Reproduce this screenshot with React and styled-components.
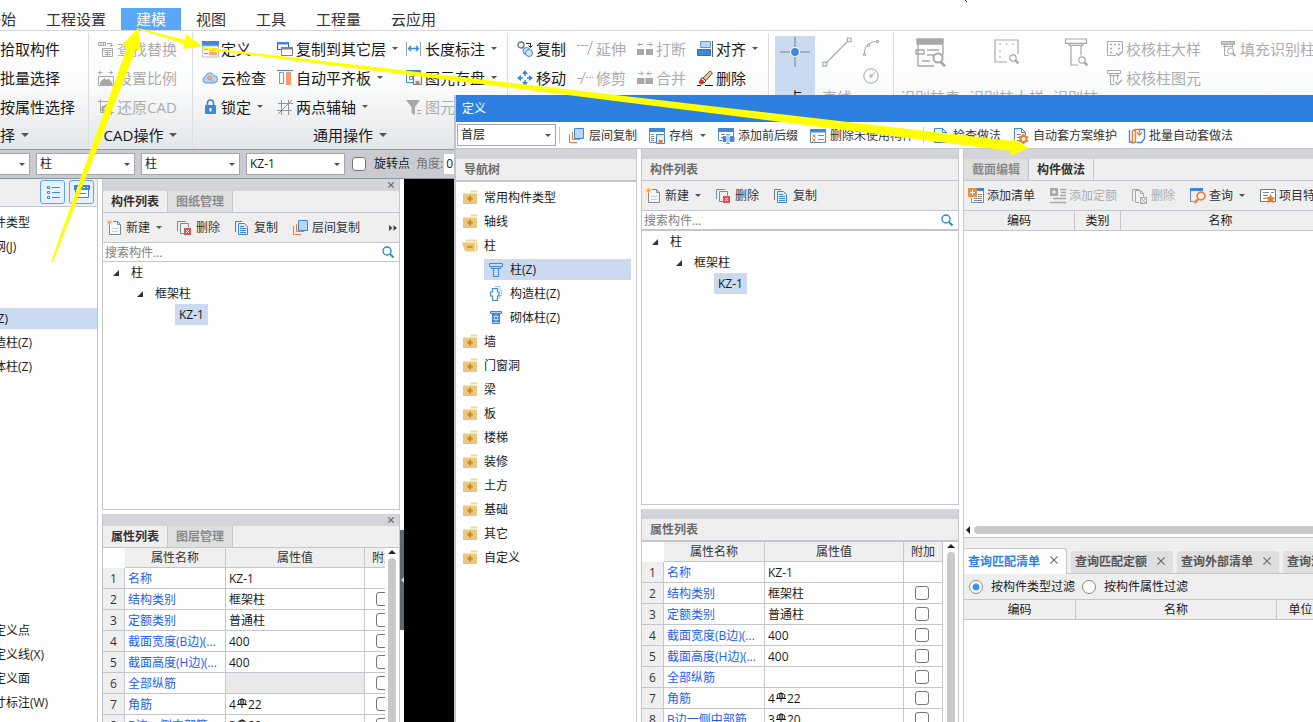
import React from "react";
import styled, { createGlobalStyle, css } from "styled-components";

const GlobalStyle = createGlobalStyle`
  * {
    box-sizing: border-box;
  }

  body {
    margin: 0;
    font-family: "Open Sans", "Noto Sans CJK SC", sans-serif;
    font-size: 12px;
    line-height: 20px;
    color: #1a1a1a;
  }

  button,
  input,
  select {
    margin: 0;
    font: inherit;
    color: inherit;
  }
`;

const BLUE = "#3f87d9";
const GRAY = "#a8a8a8";
const ORANGE = "#ee7b2f";
const LINE = "#c3c6cc";

/* ---------- icons ---------- */

const Svg = styled.svg`
  display: block;
  flex: none;
  overflow: visible;
`;

const icons = {
  findReplace: (
    <g fill="none" stroke={GRAY}>
      <path d="M0.500 1.500h7v3h-7zM3 1.500v3M5.500 1.500v3M9 2.500h4.500V5M12 4l1.500 1.500L15 4" />
      <path d="M4.500 7.500h10v8h-10zM4.500 9.500h10M6.500 11.500h6M6.500 13.500h6M9.500 9.500v6" />
    </g>
  ),
  scale: (
    <g fill="none" stroke={GRAY}>
      <path d="M0.500 2.500h4M2.500 0.500l-2 2 2 2M10.500 2.500h4M12.500 0.500l2 2-2 2M0.500 6.500h15v9H0.500z" />
      <path d="M2.500 14.500v-2l4-4 2 2 2-1.500 3.500 4v1.500z" fill={GRAY} />
    </g>
  ),
  restore: (
    <g fill="none" stroke={GRAY}>
      <path d="M2.500 0v13.500H16M0 2.500h13.500V16" />
      <path d="M4 12c1-4 3-6 8-7M4 12l1-5M4 12l5-1" strokeWidth="2" />
    </g>
  ),
  define: (
    <>
      <path d="M0 0h17v5H0z" fill={BLUE} />
      <path d="M0.500 5h16v11h-16z" fill="#f3f3f3" stroke="#bfc4ca" />
      <path d="M2 8.500h4M2 12.500h4" stroke="#8a9299" />
      <path d="M7.500 7.500h7v2h-7zM7.500 11.500h7v2h-7z" fill="#f6bf62" stroke="#efa744" />
    </>
  ),
  cloud: (
    <>
      <path d="M4 13a3.300 3.300 0 0 1-.5-6.500A4.500 4.500 0 0 1 12 5.500a3.800 3.800 0 0 1 .5 7.500z" fill="#b5d3f5" stroke="#5c97dc" />
      <circle cx="7.500" cy="8" r="1.800" fill="none" stroke={ORANGE} />
      <path d="M9 9.500l2 2" stroke={ORANGE} />
    </>
  ),
  lock: (
    <>
      <path d="M5.500 7V4a3 3 0 0 1 6 0v3" fill="none" stroke="#3f7fd0" strokeWidth="1.600" />
      <rect x="3" y="6" width="11" height="9" rx="1" fill={BLUE} />
      <path d="M8.500 9v3.500" stroke="#fff" strokeWidth="2" />
    </>
  ),
  copyLayer: (
    <>
      <path d="M0.500 1.500h11v7h-11z" fill="#fff" stroke="#444f5c" />
      <path d="M0 1h12v2.500H0z" fill={BLUE} />
      <path d="M4.500 6.500h11v8h-11z" fill="#fff" stroke="#7b858f" />
      <path d="M4 6h12v2.500H4z" fill="#7b858f" />
    </>
  ),
  flatSlab: (
    <>
      <path d="M0 0.500h16" stroke={BLUE} />
      <path d="M2.500 2.500h4v11h-4z" fill="#fff" stroke="#8d949b" />
      <path d="M9 2h5v13H9z" fill="#fb9a6d" />
    </>
  ),
  axis: (
    <>
      <path d="M4.500 1v15M11.500 1v15M1 4.500h15M0 11.500h15" stroke="#8e969c" />
      <path d="M1 15L15 1" stroke={ORANGE} />
    </>
  ),
  dimension: (
    <>
      <path d="M0.500 1v14M14.500 1v14" stroke="#9aa2aa" />
      <path d="M2.500 7.500h10M5 5L2.500 7.500 5 10M10 5l2.500 2.500L10 10" fill="none" stroke={BLUE} strokeWidth="1.400" />
    </>
  ),
  saveElement: (
    <>
      <path d="M0.500 1v11.500H7" fill="none" stroke={BLUE} />
      <path d="M0 0h15v4H0z" fill={BLUE} />
      <path d="M3.500 6.500h3v3h-3z" fill="none" stroke="#7c8790" />
      <path d="M7.500 5.500h8v9h-8z" fill="#e4f0fd" stroke={BLUE} />
      <path d="M9 6h5v3H9z" fill="#fff" />
      <path d="M9.500 11h4v3.500h-4z" fill={ORANGE} />
    </>
  ),
  filter: (
    <>
      <path d="M0 1h14L9 8v8l-3.500-2V8z" fill={GRAY} />
      <path d="M11 11.500h4M11 14.500h4" stroke={GRAY} />
    </>
  ),
  copyCircles: (
    <>
      <circle cx="4" cy="4" r="3" fill="#fff" stroke="#636b72" strokeWidth="1.300" />
      <circle cx="9.500" cy="10" r="3.500" fill="#cfe4fa" stroke={BLUE} />
      <circle cx="12" cy="12" r="3.500" fill="#cfe4fa" stroke={BLUE} />
      <path d="M9 2.500h4.500V6M11.500 4.500l2 2 2-2" fill="none" stroke="#222" />
    </>
  ),
  move: (
    <path
      d="M8 0l3 4H5zM8 16l3-4H5zM0 8l4-3v6zM16 8l-4-3v6zM7.200 4h1.600v2h-1.600zM7.200 10h1.600v2h-1.600zM4 7.200h2v1.600H4zM10 7.200h2v1.600h-2z"
      fill={BLUE}
    />
  ),
  extend: <path d="M0 4.500h3M4 4.500h3M8 4.500h3M10.500 14L15.500 0" fill="none" stroke={GRAY} />,
  trim: <path d="M0 8.500h5M3.500 14L8.500 2M9 7.500h2M12 7.500h2M15 7.500h1" fill="none" stroke={GRAY} />,
  breakUp: (
    <>
      <path d="M0 8h7v6H0zM9 8h7v6H9z" fill={GRAY} />
      <path d="M1 3.500h5M3 1.500l-2 2 2 2M10 3.500h5M13 1.500l2 2-2 2" fill="none" stroke={GRAY} />
    </>
  ),
  merge: (
    <>
      <path d="M0 8h7.500v6H0zM8.500 8H16v6H8.500z" fill={GRAY} />
      <path d="M1 3.500h5M4 1.500l2 2-2 2M10 3.500h5M12 1.500l-2 2 2 2" fill="none" stroke={GRAY} />
    </>
  ),
  align: (
    <>
      <path d="M3.500 0.500h10v6h-10z" fill="#b9d6f7" stroke="#5c97dc" />
      <path d="M0.500 8.500h13v6h-13z" fill={BLUE} stroke="#2f6fc0" />
      <path d="M15.500 0v16" stroke="#59636d" />
    </>
  ),
  brush: (
    <>
      <path d="M6 8l7-7 2.500 2L9 10.500z" fill="#e8c795" stroke="#6a5238" />
      <path d="M5 7.500l4 3.500-2 2-3.500-3z" fill="#fff" stroke="#444" />
      <circle cx="4.500" cy="12" r="2.500" fill="#c63d22" />
      <path d="M0 15.500h4M8 15.500h8" stroke="#222" />
    </>
  ),
  checkSample: (
    <g fill="none" stroke={GRAY}>
      <path d="M9 14.500H0.500v-14h15V9" />
      <path d="M3 3.500h2M7 3.500h2M11 3.500h2M3 7.500h2M3 11.500h2M11 7.500h2" strokeWidth="1.500" />
      <path d="M9 12l2.500 2.500L16 10" strokeWidth="1.500" />
    </g>
  ),
  checkColumn: (
    <g fill="none" stroke={GRAY}>
      <path d="M0.500 0.500h13v3h-13zM3.500 3.500v11h4M10.500 3.500v6M6.500 5v7M2 5.500h10" />
      <path d="M8 12l2.500 2.500L15 10" strokeWidth="1.500" />
    </g>
  ),
  fillColumn: (
    <g fill="none" stroke={GRAY}>
      <path d="M0.500 0.500h13v3h-13z" fill="#c8c8c8" />
      <path d="M3.500 3.500v11h4M2 5.500h10M11.500 3.500v3" />
      <circle cx="9.500" cy="10" r="3" />
      <path d="M11.500 12l3 3" strokeWidth="2" />
    </g>
  ),
  list: (
    <g fill="none" stroke={BLUE}>
      <path d="M2.500 2.500h2v2h-2zM2.500 7.500h2v2h-2zM2.500 12.500h2v2h-2zM7 3.500h8M7 8.500h8M7 13.500h8" />
    </g>
  ),
  cards: (
    <>
      <path d="M1.500 3.500h13v10h-13z" fill="#fff" stroke={BLUE} />
      <path d="M0 1h16v5H0z" fill={BLUE} />
      <path d="M3 3.500h4M9 3.500h2M13 3.500h1" stroke="#fff" />
      <path d="M4 9.500h8" stroke={BLUE} />
    </>
  ),
  newPage: (
    <>
      <path d="M2.500 5v9.500h11V4.500l-3-3H6" fill="#f4f6f7" stroke="#7c8c93" />
      <path d="M10.500 1.500v3h3" fill="none" stroke="#7c8c93" />
      <path d="M5 8.500h6M5 11.500h6" stroke="#c9d0d4" />
      <path d="M0.500 0.500l4 4M4.500 0.500l-4 4M2.500 0v5M0 2.500h5" stroke="#f0a03c" strokeWidth="0.800" />
    </>
  ),
  remove: (
    <>
      <path d="M0.500 11V1.500H9M7 13.500H3.500v-10h8v4" fill="none" stroke="#7c8c93" />
      <path d="M7 8h7v7H7z" fill="#d75459" />
      <path d="M9 10l3 3M12 10l-3 3" stroke="#fff" />
    </>
  ),
  removeOff: (
    <>
      <path d="M0.500 13V1.500H7M7 14.500H3.500v-12h5l3 3v3M8.500 2.500v3h3" fill="none" stroke={GRAY} />
      <path d="M8.500 9.500h6v6h-6zM8.500 9.500l6 6M14.500 9.500l-6 6" fill="none" stroke={GRAY} />
    </>
  ),
  copy: (
    <>
      <path d="M0.500 12V1.500H7" fill="none" stroke="#5f7f99" />
      <path d="M3.500 3.500h6l3 3v8h-9z" fill="#dcebfb" stroke={BLUE} />
      <path d="M5 6.500h4M5 8.500h6M5 10.500h6M5 12.500h6" stroke={BLUE} />
    </>
  ),
  layers: (
    <>
      <path d="M0.500 6v8.500H8M3.500 4v7.500H11" fill="none" stroke={ORANGE} />
      <path d="M5.500 0.500h9v10h-9z" fill="#b5d5fb" stroke={BLUE} />
    </>
  ),
  archive: (
    <>
      <path d="M0.500 1v13.500H8M15.500 1v6" fill="none" stroke="#6c8aa8" />
      <path d="M0 0h16v4H0z" fill={BLUE} />
      <path d="M2 6.500h3M2 8.500h3M2 10.500h3M2 12.500h3" stroke="#7c8790" />
      <path d="M7.500 6.500h8v9h-8z" fill="#e4f0fd" stroke={BLUE} />
      <path d="M9.500 12h4v3.500h-4z" fill={ORANGE} />
    </>
  ),
  prefix: (
    <>
      <path d="M0.500 1v11.500H4M15.500 1v7" fill="none" stroke="#6c8aa8" />
      <path d="M0 0h16v4H0z" fill={BLUE} />
      <path d="M3 6.500h4M3 9.500h3" stroke="#7c8790" />
      <path d="M5 8.500h3v5H5zM12 8.500h4v5h-4zM10 7v8M8 15.500h4M8 6.500h4" fill={BLUE} stroke={BLUE} strokeWidth="0.800" />
    </>
  ),
  unused: (
    <>
      <path d="M0.500 1.500h15v13h-15z" fill="#fff" stroke="#6c8aa8" />
      <path d="M0 1h16v3.500H0z" fill={BLUE} />
      <path d="M2.500 6.500l3 3M5.500 6.500l-3 3M2.500 10.500l3 3M5.500 10.500l-3 3" stroke={ORANGE} />
      <path d="M8 7.500h6M8 11.500h6" stroke="#7c8790" />
    </>
  ),
  checkDoc: (
    <>
      <path d="M1.500 0.500h8l4 4v10h-12z" fill="#eaf3fd" stroke={BLUE} />
      <path d="M9.500 0.500v4h4" fill="none" stroke={BLUE} />
      <path d="M4 5.500h4M4 8.500h7M4 11.500h7" stroke="#7c8790" />
    </>
  ),
  gearDoc: (
    <>
      <path d="M1.500 0.500h7l4 4v3M1.500 0.500v14H6M8.500 0.500v4h4" fill="none" stroke={BLUE} />
      <path d="M4 6.500h4M4 9.500h2M4 12.500h2" stroke="#7c8790" />
      <circle cx="10.500" cy="11" r="3" fill="#fff" stroke={ORANGE} strokeWidth="2" />
      <path d="M10.500 6v1.500M10.500 14.500V16M6 8.500l1.500 1M13.500 12.500l1.500 1M6 13.500l1.500-1M13.500 9.500l1.500-1" stroke={ORANGE} strokeWidth="2" />
    </>
  ),
  batch: (
    <>
      <path d="M0.500 2v12h3M10 1.500h5.500v9l-3 4h-5" fill="none" stroke={BLUE} strokeWidth="1.400" />
      <path d="M3.500 2.500v12.500l3-1V1.500L3.500 2.500M7 1.500h3.500V6M13 4.500L10.500 7 8 4.500" fill="none" stroke={ORANGE} strokeWidth="1.400" />
    </>
  ),
  addList: (
    <>
      <path d="M9 1.500h6.500v13H3.500V10" fill="#fff" stroke="#6c8aa8" />
      <path d="M9 0h7v3H9z" fill={BLUE} />
      <path d="M10 6.500h4M10 8.500h4M6 10.500h8M6 12.500h8" stroke="#7c8790" />
      <path d="M0 0h9v9H0z" fill="#ef9138" />
      <path d="M4.500 2v5M2 4.500h5" stroke="#fff" />
    </>
  ),
  addQuota: (
    <>
      <path d="M0 0h8v8H0z" fill={GRAY} />
      <path d="M4 2v4M2 4h4" stroke="#fff" />
      <path d="M10 1.500h6M11 4.500h5M10 7.500h6M3 10.500h13M0 14.500h16" stroke={GRAY} strokeWidth="1.300" />
    </>
  ),
  query: (
    <>
      <path d="M0 0h13v3H0z" fill={BLUE} />
      <path d="M0.500 3v10.500h3" fill="none" stroke="#6c8aa8" />
      <circle cx="11" cy="8" r="3.800" fill="#f6f6f6" stroke={ORANGE} strokeWidth="1.700" />
      <path d="M8 11L4.500 15" stroke={ORANGE} strokeWidth="2.200" />
    </>
  ),
  feature: (
    <>
      <path d="M0.500 1.500h15v12h-15z" fill="#fff" stroke="#6c7a86" />
      <path d="M3 4.500h6M3 7.500h5M3 10.500h3M11 4.500h3" stroke="#7c8790" />
      <path d="M10.500 6l1.500 3 3.500.5-2.500 2.300.6 3.400-3.100-1.600-3.100 1.600.6-3.400L5.500 9.500 9 9z" fill={ORANGE} />
    </>
  ),
  folder: (
    <>
      <path d="M8 2l1-1.500h6V2.500H8z" fill="#f0d79f" />
      <path d="M1 3.500h14V14H1z" fill="#ecc67b" />
      <path d="M8 6v5.500M5.200 8.700h5.600" stroke="#b98630" strokeWidth="1.800" />
    </>
  ),
  folderOpen: (
    <>
      <path d="M4 1.500h11v2H3z" fill="#f0d79f" />
      <path d="M0 4.500h13v9H3z" fill="#ecc67b" />
      <path d="M14 4.500h1.500v7L14 13.500z" fill="#ecc67b" />
      <path d="M5 9h5.500" stroke="#b98630" strokeWidth="1.500" />
    </>
  ),
  column: (
    <g fill="none" stroke={BLUE}>
      <path d="M1.500 1.500h13v3h-13zM3.500 4.500v2h9v-2M5.500 6.500v8h5v-8" />
    </g>
  ),
  structColumn: (
    <g fill="none" stroke={BLUE}>
      <path d="M7 0.500h5v4h1.500v5H12v3" stroke="#86b3e8" strokeDasharray="2 1" />
      <path d="M4.500 2.500h5v3.500h1.500v4H9.500v4.500h-5V10H2.500V6h2z" fill="#fff" strokeWidth="1.200" />
    </g>
  ),
  brickColumn: (
    <>
      <path d="M2.500 1.500h11v2h-11z" fill="#b5d5fb" stroke={BLUE} />
      <path d="M4.500 3.500h7v10h-7z" fill={BLUE} stroke={BLUE} />
      <path d="M5 6.500h6M5 9.500h6M5 12.500h6M8 4v2M6.500 7v2M9.500 7v2M8 10v2" stroke="#cfe2f8" strokeWidth="0.800" />
    </>
  ),
  search: (
    <g fill="none" stroke="#2b8cc4" strokeWidth="1.400">
      <circle cx="7" cy="7" r="4" />
      <path d="M10 10l3.500 3.500" strokeWidth="2" />
    </g>
  ),
  point: (
    <>
      <path d="M8 0v16M0 8h16" stroke="#7d8791" strokeWidth="0.600" />
      <circle cx="8" cy="8" r="2.400" fill={BLUE} stroke="#fff" strokeWidth="0.600" />
    </>
  ),
  line: (
    <g fill="none" stroke={GRAY} strokeWidth="0.600">
      <path d="M2 14L14 2M0.500 13.500h2v2h-2zM13.500 0.500h2v2h-2z" />
    </g>
  ),
  arc: (
    <g fill="none" stroke={GRAY}>
      <path d="M1.500 13C1.500 7 5 2 13 1.500M0.500 13.500h2v2h-2zM4.500 4.500h2v2h-2zM13.500 0.500h2v2h-2z" />
    </g>
  ),
  circle: (
    <g fill="none" stroke={GRAY}>
      <circle cx="8" cy="8" r="7.200" />
      <path d="M7 7h2v2H7zM9 7l3-2.500" />
    </g>
  ),
  columnTable: (
    <g fill="none" stroke={GRAY} strokeWidth="0.700">
      <path d="M1.500 1h13v2.500h-13z" fill={GRAY} />
      <path d="M2 4v10.500h8M14.500 4v5M1 6.500h4v2H1zM6.500 6.500h6M6.500 9h3M4 12h4" />
      <circle cx="12" cy="10.500" r="2.300" strokeWidth="1" />
      <path d="M13.500 12.500l2 2.200" strokeWidth="1.400" />
    </g>
  ),
  columnSample: (
    <g fill="none" stroke={GRAY} strokeWidth="0.600">
      <path d="M8 12.500H2V1.500h11.500v7" />
      <path d="M4 3.500h1M7.200 3.500h1M10.500 3.500h1M4 7h1M4 10h1" />
      <circle cx="11" cy="10.500" r="1.600" />
      <path d="M12.200 11.700l1.500 1.500" strokeWidth="1.200" />
    </g>
  ),
  columnFind: (
    <g fill="none" stroke={GRAY} strokeWidth="0.600">
      <path d="M2.800 1h10.400v2.200H2.800zM4.500 3.200v1h7v-1M5.500 4.200v9.800h3.500M10.500 4.200v5" />
      <circle cx="11" cy="11.500" r="1.600" />
      <path d="M12.200 12.700l1.500 1.500" strokeWidth="1.200" />
    </g>
  ),
};

function Icon({ name, size = 16 }) {
  return (
    <Svg width={size} height={size} viewBox="0 0 16 16" aria-hidden="true">
      {icons[name]}
    </Svg>
  );
}

const CaretSvg = styled(Svg)`
  margin-left: ${(p) => (p.$flush ? "0" : "3px")};
`;

function Caret({ flush, wide }) {
  return (
    <CaretSvg $flush={flush} width={wide ? 8 : 6} height={wide ? 4 : 3} viewBox="0 0 6 3" aria-hidden="true">
      <path d="M0 0h6L3 3z" fill="#555" />
    </CaretSvg>
  );
}

/* HRB400 bar mark drawn between count and diameter */
function Rebar() {
  return (
    <RebarSvg width="12" height="10" viewBox="0 0 12 10" aria-label="HRB400">
      <path d="M6 0v10M1 6.500h10" stroke="#1a1a1a" />
      <path d="M4.500 1.500v5M7.500 1.500v5" stroke="#1a1a1a" strokeWidth="0.700" />
      <ellipse cx="6" cy="4" rx="4" ry="2.700" fill="none" stroke="#1a1a1a" />
    </RebarSvg>
  );
}

/* ---------- main window ---------- */

const Page = styled.div`
  position: relative;
  display: flex;
  flex-direction: column;
  height: 100vh;
  overflow: hidden;
  background: #fff;
`;

const MenuBar = styled.nav`
  display: flex;
  align-items: flex-end;
  height: 31px;
  flex: none;
  padding-top: 8px;
  border-bottom: 1px solid #d5d6d9;
`;

/* the first tab runs under the left edge of the window */
const MenuTabs = styled.div`
  display: flex;
  margin-left: -29px;
`;

const MenuTab = styled.button`
  height: 22px;
  padding: 1px 15px 0;
  border: 0;
  font-size: 15px;
  line-height: 21px;
  white-space: nowrap;
  color: ${(p) => (p.$active ? "#fff" : "#333")};
  background: ${(p) => (p.$active ? "#5aa7f8" : "transparent")};
`;

const Ribbon = styled.div`
  display: flex;
  flex: none;
  padding: 2px 0;
  border-bottom: 1px solid #8f959d;
  background: linear-gradient(#fff 0%, #fbfcfc 45%, #e3e6e9 100%);
  overflow: hidden;
`;

const Group = styled.section`
  flex: ${(p) => (p.$width ? "none" : "1")};
  width: ${(p) => (p.$width ? `${p.$width}px` : "auto")};
  padding-top: 1px;
  border-right: 1px solid #dcdde0;
`;

const GroupGrid = styled.div`
  display: grid;
  grid-template-rows: repeat(3, 29px);
  grid-template-columns: ${(p) => p.$cols || "1fr"};
  grid-auto-flow: column;
  padding-left: ${(p) => p.$inset || 0}px;
`;

const GroupTitle = styled.div`
  display: flex;
  align-items: center;
  justify-content: ${(p) => (p.$start ? "flex-start" : "center")};
  gap: 3px;
  height: 26px;
  padding-top: 2px;
  font-size: 15px;
`;

const RibbonButton = styled.button`
  display: flex;
  align-items: center;
  gap: 3px;
  padding: 0;
  border: 0;
  background: none;
  font-size: 15px;
  white-space: nowrap;
  color: ${(p) => (p.$off ? "#adadad" : "#1a1a1a")};
`;

const BigTools = styled.div`
  display: flex;
  align-items: flex-start;
  gap: ${(p) => p.$gap}px;
  padding-left: 6px;
`;

const BigButton = styled.button`
  display: flex;
  flex-direction: column;
  align-items: center;
  justify-content: space-between;
  min-width: 40px;
  height: 72px;
  margin-top: 2px;
  padding: 1px 0;
  border: 0;
  font-size: 15px;
  white-space: nowrap;
  color: ${(p) => (p.$active ? "#1a1a1a" : "#adadad")};
  background: ${(p) => (p.$active ? "#c9daf1" : "transparent")};
`;

const MiniTools = styled.div`
  display: flex;
  flex-direction: column;
  gap: 12px;
  padding: 6px 4px;
`;

const MiniButton = styled.button`
  padding: 0;
  border: 0;
  background: none;
`;

const OptionBar = styled.div`
  display: flex;
  align-items: center;
  gap: 6px;
  flex: none;
  height: 29px;
  border-bottom: 1px solid #8f959d;
  background: #c9cbd0;

  > :first-child {
    margin-left: -69px;
  }
`;

const ComboBox = styled.div`
  display: grid;
  align-items: center;
  flex: none;
  width: 99px;
  height: 22px;
  border: 1px solid #a4a7ab;
  background: #fff;

  > * {
    grid-area: 1 / 1;
  }

  > svg {
    justify-self: end;
    margin-right: 4px;
    pointer-events: none;
  }
`;

const Select = styled.select`
  width: 100%;
  height: 20px;
  padding: 0 3px;
  border: 0;
  appearance: none;
  background: transparent;
  outline: none;
`;

function Combo({ label, value }) {
  return (
    <ComboBox>
      <Select aria-label={label} defaultValue={value}>
        <option>{value}</option>
      </Select>
      <Caret flush />
    </ComboBox>
  );
}

const CheckBox = styled.input.attrs({ type: "checkbox" })`
  display: block;
  flex: none;
  width: 14px;
  height: 14px;
  appearance: none;
  border: 1px solid #777;
  border-radius: 3px;
  background: #fff;
`;

const CheckLabel = styled.label`
  display: flex;
  align-items: center;
  gap: 8px;
  padding-left: 1px;
  white-space: nowrap;
`;

const AngleLabel = styled.label`
  display: flex;
  align-items: center;
  gap: 1px;
  white-space: nowrap;
  color: #777;
`;

const AngleInput = styled.input`
  width: 60px;
  height: 20px;
  padding: 0 2px;
  border: 0;
  color: #1a1a1a;
`;

const Workspace = styled.div`
  display: flex;
  flex: 1;
  min-height: 0;
`;

const LeftNav = styled.aside`
  flex: none;
  width: 98px;
  border-right: 1px solid ${LINE};
  overflow: hidden;
`;

const LeftNavHeader = styled.div`
  display: flex;
  justify-content: flex-end;
  gap: 4px;
  height: 28px;
  padding: 1px 3px 0 0;
  border-bottom: 1px solid ${LINE};
  background: #efefef;
`;

const ViewButton = styled.button`
  display: grid;
  place-items: center;
  width: 25px;
  height: 24px;
  padding: 0;
  border: 1px solid #5aa7f8;
  border-radius: 3px;
  background: #e6f1fd;
`;

const NavList = styled.div`
  display: flex;
  flex-direction: column;
  gap: 3px;
  padding-top: 5px;
`;

const NavSection = styled(NavList)`
  padding-top: ${(p) => p.$skip * 24}px;
`;

const NavRow = styled.div`
  display: flex;
  align-items: center;
  gap: 6px;
  height: 21px;
  padding-left: 6px;
  white-space: nowrap;

  ${(p) =>
    p.$child &&
    css`
      margin: 0 5px 0 28px;
      padding-left: 4px;
    `}

  background: ${(p) => (p.$active ? "#c9daf1" : "transparent")};
`;

const ClippedRow = styled(NavRow)`
  padding-left: 0;
  text-indent: -6px;
`;

const Dock = styled.div`
  display: flex;
  flex-direction: column;
  gap: 4px;
  flex: none;
  width: ${(p) => p.$width}px;
  margin-left: 4px;
`;

const Panel = styled.section`
  display: flex;
  flex-direction: column;
  flex: ${(p) => p.$share || 1} 1 0;
  min-height: 0;
  overflow: hidden;
  border: 1px solid ${LINE};
  border-width: ${(p) => (p.$bottom ? "0 1px 0 1px" : "0 1px 1px 1px")};
`;

const Grip = styled.div`
  display: flex;
  align-items: center;
  justify-content: flex-end;
  flex: none;
  height: ${(p) => (p.$thin ? 10 : 12)}px;
  padding-right: 5px;
  background: #d4d5da;
`;

const CloseButton = styled.button`
  display: block;
  padding: 0;
  border: 0;
  background: none;
`;

function Close({ label, size = 6 }) {
  return (
    <CloseButton aria-label={label}>
      <Svg width={size} height={size} viewBox="0 0 6 6">
        <path d="M0.300 0.300l5.400 5.400M5.700 0.300L0.300 5.700" stroke="#666" strokeWidth={size > 6 ? 0.8 : 1.2} />
      </Svg>
    </CloseButton>
  );
}

const TabStrip = styled.div`
  display: flex;
  flex: none;
  height: 22px;
  border-bottom: 1px solid ${LINE};
  background: #efefef;
`;

const Tab = styled.button`
  width: 65px;
  padding: 0;
  border: 0;
  border-right: 1px solid ${LINE};
  font-weight: bold;
  color: ${(p) => (p.$active ? "#333" : "#8b8b8b")};
  background: ${(p) => (p.$active ? "#efefef" : "#dfdfdf")};
`;

const PanelTitle = styled.h2`
  flex: none;
  height: ${(p) => (p.$thick ? 23 : 22)}px;
  margin: 0;
  padding-left: 8px;
  border-bottom: ${(p) => (p.$thick ? 2 : 1)}px solid ${LINE};
  background: #efefef;
  font-size: 12px;
  font-weight: bold;
  line-height: 21px;
  color: #6c6c6c;
`;

const ToolRow = styled.div`
  display: flex;
  align-items: center;
  gap: 7px;
  flex: none;
  height: 30px;
  border-bottom: 1px solid ${LINE};
  background: #efefef;
  overflow: hidden;
`;

const ToolButton = styled.button`
  display: flex;
  align-items: center;
  gap: 3px;
  flex: none;
  padding: 0 4px;
  border: 0;
  background: none;
  white-space: nowrap;
  color: ${(p) => (p.$off ? "#adadad" : "#333")};
`;

const MoreButton = styled(ToolButton)`
  margin-left: auto;
  padding: 0 2px;
`;

const SearchRow = styled.label`
  display: flex;
  align-items: center;
  flex: none;
  height: ${(p) => (p.$thick ? 20 : 19)}px;
  padding-right: 3px;
  border-bottom: ${(p) => (p.$thick ? 2 : 1)}px solid ${LINE};
`;

const SearchInput = styled.input`
  flex: 1;
  min-width: 0;
  height: 18px;
  padding: 1px 2px 0;
  border: 0;
  outline: none;

  &::placeholder {
    color: #808080;
  }
`;

const Tree = styled.ul`
  margin: 0;
  padding: 0;
  list-style: none;
`;

const TreeRow = styled.li`
  display: flex;
  align-items: center;
  gap: 12px;
  height: 21px;
  padding-left: ${(p) => 10 + p.$level * 24}px;
`;

const TreeLabel = styled.span`
  line-height: 21px;

  ${(p) =>
    p.$active &&
    css`
      margin-left: 14px;
      padding: 0 4px;
      background: #c9daf1;
    `}
`;

function Expander() {
  return (
    <Svg width="6" height="6" viewBox="0 0 6 6" aria-hidden="true">
      <path d="M6 0v6H0z" fill="#333" />
    </Svg>
  );
}

function ComponentTree() {
  return (
    <Tree>
      <TreeRow $level={0}>
        <Expander />
        <TreeLabel>柱</TreeLabel>
      </TreeRow>
      <TreeRow $level={1}>
        <Expander />
        <TreeLabel>框架柱</TreeLabel>
      </TreeRow>
      <TreeRow $level={2}>
        <TreeLabel $active>KZ-1</TreeLabel>
      </TreeRow>
    </Tree>
  );
}

function Search({ thick }) {
  return (
    <SearchRow $thick={thick}>
      <SearchInput type="text" placeholder="搜索构件..." aria-label="搜索构件" />
      <Icon name="search" />
    </SearchRow>
  );
}

/* ---------- property table ---------- */

const TableArea = styled.div`
  display: flex;
  flex: 1;
  min-height: 0;
`;

const TableClip = styled.div`
  flex: 1;
  min-width: 0;
  overflow: hidden;
`;

const PropTable = styled.table`
  width: 301px;
  table-layout: fixed;
  border-collapse: separate;
  border-spacing: 0;
`;

const Th = styled.th`
  height: 20px;
  padding: 1px 0 0;
  border-right: 1px solid ${LINE};
  border-bottom: 1px solid ${LINE};
  background: #efefef;
  font-weight: normal;
  line-height: 18px;
  color: #333;

  &:first-child {
    border-color: #fff;
    background: #fff;
  }
`;

const Td = styled.td`
  height: 21px;
  padding: 2px 3px 0;
  border-right: 1px solid ${LINE};
  border-bottom: 1px solid ${LINE};
  line-height: 18px;
  white-space: nowrap;
  background: ${(p) => (p.$muted ? "#e9e9e9" : "#fff")};
`;

const NumberCell = styled(Td)`
  padding: 2px 0 0;
  background: #efefef;
  text-align: center;
  color: #333;
`;

const NameCell = styled(Td)`
  overflow: hidden;
  color: #1c5ff0;
`;

const CheckCell = styled(Td)`
  padding: 0 11px;
`;

const RebarSvg = styled(Svg)`
  display: inline-block;
  vertical-align: 1px;
`;

const ScrollBar = styled.div`
  display: flex;
  flex-direction: column;
  align-items: center;
  gap: 4px;
  flex: none;
  width: ${(p) => p.$width}px;
  padding-top: 2px;
`;

const Thumb = styled.div`
  flex: 1;
  width: 8px;
  border-radius: 4px 4px 0 0;
  background: #c9c9c9;
`;

const rows = [
  ["名称", "KZ-1"],
  ["结构类别", "框架柱"],
  ["定额类别", "普通柱"],
  ["截面宽度(B边)(...", "400"],
  ["截面高度(H边)(...", "400"],
  ["全部纵筋", ""],
  ["角筋", ["4", "22"]],
  ["B边一侧中部筋", ["3", "20"]],
];

function Properties({ muteEmpty, barWidth }) {
  return (
    <TableArea>
      <TableClip>
        <PropTable>
          <colgroup>
            <col width="22" />
            <col width="101" />
            <col width="139" />
            <col width="39" />
          </colgroup>
          <thead>
            <tr>
              <Th />
              <Th>属性名称</Th>
              <Th>属性值</Th>
              <Th>附加</Th>
            </tr>
          </thead>
          <tbody>
            {rows.map(([name, value], i) => (
              <tr key={name}>
                <NumberCell>{i + 1}</NumberCell>
                <NameCell>{name}</NameCell>
                <Td $muted={muteEmpty && value === ""}>
                  {Array.isArray(value) ? (
                    <>
                      {value[0]}
                      <Rebar />
                      {value[1]}
                    </>
                  ) : (
                    value
                  )}
                </Td>
                <CheckCell>{i > 0 && <CheckBox aria-label={`附加 ${name}`} />}</CheckCell>
              </tr>
            ))}
          </tbody>
        </PropTable>
      </TableClip>
      <ScrollBar $width={barWidth}>
        <Svg width="8" height="4" viewBox="0 0 8 4" aria-hidden="true">
          <path d="M4 0l4 4H0z" fill="#222" />
        </Svg>
        <Thumb />
      </ScrollBar>
    </TableArea>
  );
}

const Splitter = styled.div`
  display: flex;
  flex-direction: column;
  justify-content: center;
  flex: none;
  width: 4px;
  padding-top: 259px;
`;

const SplitterHandle = styled.button`
  display: grid;
  place-items: center;
  width: 4px;
  height: 100px;
  padding: 0;
  border: 0;
  background: #5c6872;
`;

const Canvas = styled.div`
  flex: 1;
  background: #000;
`;

/* ---------- definition dialog ---------- */

const Dialog = styled.div`
  position: absolute;
  inset: 95px 0 0 454px;
  display: flex;
  flex-direction: column;
  border-left: 2px solid #bfc4ce;
  background: #fff;
`;

const DialogTitle = styled.h1`
  flex: none;
  height: 27px;
  margin: 0;
  padding-left: 6px;
  background: #2d7fe0;
  font-size: 12px;
  font-weight: normal;
  line-height: 27px;
  color: #fff;
`;

const DialogBar = styled.div`
  display: flex;
  align-items: center;
  flex: none;
  height: 27px;
  padding-left: 1px;
  border-bottom: 1px solid ${LINE};
  overflow: hidden;
`;

const Divider = styled.span`
  flex: none;
  width: 1px;
  height: 16px;
  margin: 0 3px;
  background: #c9c9c9;
`;

const BarButton = styled(ToolButton)`
  gap: 4px;
  padding: 1px 6px 0;
`;

const DialogBody = styled.div`
  display: flex;
  flex: 1;
  min-height: 0;
`;

const NavPanel = styled.div`
  flex: none;
  width: 181px;
  border-right: 1px solid ${LINE};
`;

const RightDock = styled.div`
  display: flex;
  flex-direction: column;
  flex: 1;
  min-width: 0;
  margin-left: 4px;
  border-left: 1px solid ${LINE};
`;

const RightPane = styled.div`
  display: flex;
  flex-direction: column;
  flex: ${(p) => p.$share} 1 0;
  min-height: 0;
  overflow: hidden;
`;

const GridTable = styled.table`
  flex: none;
  width: ${(p) => p.$width}px;
  table-layout: fixed;
  border-collapse: separate;
  border-spacing: 0;
`;

const GridTh = styled(Th)`
  color: #1a1a1a;

  &:first-child {
    border-color: ${LINE};
    background: #efefef;
  }
`;

const HScroll = styled.div`
  display: flex;
  align-items: center;
  gap: 4px;
  flex: none;
  height: 15px;
  margin-top: auto;
  padding-left: 2px;
  border-bottom: 1px solid ${LINE};
`;

const HThumb = styled.div`
  flex: 1;
  height: 8px;
  border-radius: 4px 0 0 4px;
  background: #c9c9c9;
`;

const QueryTabs = styled.div`
  display: flex;
  align-items: flex-end;
  gap: 4px;
  flex: none;
  height: 36px;
  border-bottom: 1px solid ${LINE};
  background: #efefef;
`;

const QueryTab = styled.div`
  display: flex;
  align-items: center;
  gap: 10px;
  flex: none;
  width: ${(p) => (p.$active ? 103 : 102)}px;
  height: ${(p) => (p.$active ? 26 : 22)}px;
  margin-bottom: ${(p) => (p.$active ? "-1px" : "0")};
  padding-left: 4px;
  border: ${(p) => (p.$active ? `1px solid ${LINE}` : "0")};
  border-width: ${(p) => (p.$active ? "1px 1px 0 0" : "0")};
  border-radius: 3px 3px 0 0;
  background: ${(p) => (p.$active ? "#fff" : "#dfdfdf")};

  > :last-child {
    padding-bottom: 3px;
  }
`;

const QueryTabButton = styled.button`
  padding: 0;
  border: 0;
  background: none;
  font-weight: bold;
  white-space: nowrap;
  color: ${(p) => (p.$active ? "#2d7fe0" : "#555")};
`;

const RadioRow = styled.div`
  display: flex;
  align-items: center;
  gap: 7px;
  flex: none;
  height: 26px;
  padding-left: 5px;
  border-bottom: 1px solid ${LINE};
  background: #efefef;
`;

const RadioLabel = styled.label`
  display: flex;
  align-items: center;
  gap: 8px;
  white-space: nowrap;
`;

const Radio = styled.input.attrs({ type: "radio" })`
  width: 14px;
  height: 14px;
  appearance: none;
  border: 1px solid #888;
  border-radius: 50%;
  background: #fff;

  &:checked {
    background: radial-gradient(circle, #3f94f5 0 3px, #fff 4px);
  }
`;

const Arrows = styled.svg`
  position: absolute;
  top: 0;
  left: 0;
  pointer-events: none;
`;

const navItems = ["墙", "门窗洞", "梁", "板", "楼梯", "装修", "土方", "基础", "其它", "自定义"];

function Tool({ icon, off, caret, children }) {
  return (
    <ToolButton $off={off} disabled={off}>
      <Icon name={icon} />
      {children}
      {caret && <Caret />}
    </ToolButton>
  );
}

function BarTool({ icon, caret, children }) {
  return (
    <BarButton>
      <Icon name={icon} />
      {children}
      {caret && <Caret />}
    </BarButton>
  );
}

function RibbonTool({ icon, off, caret, children }) {
  return (
    <RibbonButton $off={off} disabled={off}>
      {icon && <Icon name={icon} />}
      {children}
      {caret && <Caret />}
    </RibbonButton>
  );
}

function MainRibbon() {
  return (
    <Ribbon>
      <Group $width={89}>
        <GroupGrid>
          <RibbonTool>拾取构件</RibbonTool>
          <RibbonTool>批量选择</RibbonTool>
          <RibbonTool>按属性选择</RibbonTool>
        </GroupGrid>
        <GroupTitle $start>
          择
          <Caret wide />
        </GroupTitle>
      </Group>
      <Group $width={104}>
        <GroupGrid $inset={9}>
          <RibbonTool icon="findReplace" off>查找替换</RibbonTool>
          <RibbonTool icon="scale" off>设置比例</RibbonTool>
          <RibbonTool icon="restore" off>还原CAD</RibbonTool>
        </GroupGrid>
        <GroupTitle>
          CAD操作
          <Caret wide />
        </GroupTitle>
      </Group>
      <Group $width={315}>
        <GroupGrid $inset={9} $cols="75px 129px 1fr">
          <RibbonTool icon="define">定义</RibbonTool>
          <RibbonTool icon="cloud">云检查</RibbonTool>
          <RibbonTool icon="lock" caret>锁定</RibbonTool>
          <RibbonTool icon="copyLayer" caret>复制到其它层</RibbonTool>
          <RibbonTool icon="flatSlab" caret>自动平齐板</RibbonTool>
          <RibbonTool icon="axis" caret>两点辅轴</RibbonTool>
          <RibbonTool icon="dimension" caret>长度标注</RibbonTool>
          <RibbonTool icon="saveElement" caret>图元存盘</RibbonTool>
          <RibbonTool icon="filter" off>图元</RibbonTool>
        </GroupGrid>
        <GroupTitle>
          通用操作
          <Caret wide />
        </GroupTitle>
      </Group>
      <Group $width={261}>
        <GroupGrid $inset={9} $cols="60px 60px 60px 1fr">
          <RibbonTool icon="copyCircles">复制</RibbonTool>
          <RibbonTool icon="move">移动</RibbonTool>
          <span />
          <RibbonTool icon="extend" off>延伸</RibbonTool>
          <RibbonTool icon="trim" off>修剪</RibbonTool>
          <span />
          <RibbonTool icon="breakUp" off>打断</RibbonTool>
          <RibbonTool icon="merge" off>合并</RibbonTool>
          <span />
          <RibbonTool icon="align" caret>对齐</RibbonTool>
          <RibbonTool icon="brush">删除</RibbonTool>
        </GroupGrid>
      </Group>
      <Group $width={125}>
        <BigTools $gap={2}>
          <BigButton $active>
            <Icon name="point" size={30} />
            点
          </BigButton>
          <BigButton disabled>
            <Icon name="line" size={30} />
            直线
          </BigButton>
          <MiniTools>
            <MiniButton aria-label="弧线">
              <Icon name="arc" />
            </MiniButton>
            <MiniButton aria-label="圆">
              <Icon name="circle" />
            </MiniButton>
          </MiniTools>
        </BigTools>
      </Group>
      <Group>
        <BigTools $gap={9}>
          <BigButton disabled>
            <Icon name="columnTable" size={32} />
            识别柱表
          </BigButton>
          <BigButton disabled>
            <Icon name="columnSample" size={32} />
            识别柱大样
          </BigButton>
          <BigButton disabled>
            <Icon name="columnFind" size={32} />
            识别柱
          </BigButton>
          <GroupGrid $cols="114px 1fr">
            <RibbonTool icon="checkSample" off>校核柱大样</RibbonTool>
            <RibbonTool icon="checkColumn" off>校核柱图元</RibbonTool>
            <span />
            <RibbonTool icon="fillColumn" off>填充识别柱</RibbonTool>
          </GroupGrid>
        </BigTools>
      </Group>
    </Ribbon>
  );
}

function MainWorkspace() {
  return (
    <Workspace>
      <LeftNav>
        <LeftNavHeader>
          <ViewButton aria-label="列表">
            <Icon name="list" />
          </ViewButton>
          <ViewButton aria-label="卡片">
            <Icon name="cards" />
          </ViewButton>
        </LeftNavHeader>
        <NavList>
          <ClippedRow>件类型</ClippedRow>
          <ClippedRow>网(J)</ClippedRow>
          <NavSection $skip={2}>
            <ClippedRow $active>(Z)</ClippedRow>
            <ClippedRow>造柱(Z)</ClippedRow>
            <ClippedRow>体柱(Z)</ClippedRow>
          </NavSection>
          <NavSection $skip={10}>
            <ClippedRow>定义点</ClippedRow>
            <ClippedRow>定义线(X)</ClippedRow>
            <ClippedRow>定义面</ClippedRow>
            <ClippedRow>寸标注(W)</ClippedRow>
          </NavSection>
        </NavList>
      </LeftNav>
      <Dock $width={298}>
        <Panel $share={331}>
          <Grip>
            <Close label="关闭构件列表" />
          </Grip>
          <TabStrip>
            <Tab $active>构件列表</Tab>
            <Tab>图纸管理</Tab>
          </TabStrip>
          <ToolRow>
            <Tool icon="newPage" caret>新建</Tool>
            <Tool icon="remove">删除</Tool>
            <Tool icon="copy">复制</Tool>
            <Tool icon="layers">层间复制</Tool>
            <MoreButton aria-label="更多">
              <Svg width="8" height="6" viewBox="0 0 8 6">
                <path d="M0 0l3.500 3L0 6zM4.500 0L8 3 4.500 6z" fill="#444" />
              </Svg>
            </MoreButton>
          </ToolRow>
          <Search />
          <ComponentTree />
        </Panel>
        <Panel $share={208} $bottom>
          <Grip>
            <Close label="关闭属性列表" />
          </Grip>
          <TabStrip>
            <Tab $active>属性列表</Tab>
            <Tab>图层管理</Tab>
          </TabStrip>
          <Properties muteEmpty barWidth={14} />
        </Panel>
      </Dock>
      <Splitter>
        <SplitterHandle aria-label="收起">
          <Svg width="3" height="6" viewBox="0 0 3 6">
            <path d="M3 0v6L0 3z" fill="#cfd4d8" />
          </Svg>
        </SplitterHandle>
      </Splitter>
      <Canvas />
    </Workspace>
  );
}

function DefinitionDialog() {
  return (
    <Dialog role="dialog" aria-label="定义">
      <DialogTitle>定义</DialogTitle>
      <DialogBar>
        <Combo label="楼层" value="首层" />
        <Divider />
        <BarTool icon="layers">层间复制</BarTool>
        <BarTool icon="archive" caret>存档</BarTool>
        <BarTool icon="prefix">添加前后缀</BarTool>
        <BarTool icon="unused">删除未使用构件</BarTool>
        <Divider />
        <BarTool icon="checkDoc">检查做法</BarTool>
        <BarTool icon="gearDoc">自动套方案维护</BarTool>
        <BarTool icon="batch">批量自动套做法</BarTool>
      </DialogBar>
      <DialogBody>
        <NavPanel>
          <Grip $thin />
          <PanelTitle $thick>导航树</PanelTitle>
          <NavList>
            <NavRow>
              <Icon name="folder" />
              常用构件类型
            </NavRow>
            <NavRow>
              <Icon name="folder" />
              轴线
            </NavRow>
            <NavRow>
              <Icon name="folderOpen" />
              柱
            </NavRow>
            <NavRow $child $active>
              <Icon name="column" />
              柱(Z)
            </NavRow>
            <NavRow $child>
              <Icon name="structColumn" />
              构造柱(Z)
            </NavRow>
            <NavRow $child>
              <Icon name="brickColumn" />
              砌体柱(Z)
            </NavRow>
            {navItems.map((item) => (
              <NavRow key={item}>
                <Icon name="folder" />
                {item}
              </NavRow>
            ))}
          </NavList>
        </NavPanel>
        <Dock $width={318}>
          <Panel $share={356}>
            <Grip $thin />
            <PanelTitle>构件列表</PanelTitle>
            <ToolRow>
              <Tool icon="newPage" caret>新建</Tool>
              <Tool icon="remove">删除</Tool>
              <Tool icon="copy">复制</Tool>
            </ToolRow>
            <Search thick />
            <ComponentTree />
          </Panel>
          <Panel $share={213} $bottom>
            <Grip $thin />
            <PanelTitle $thick>属性列表</PanelTitle>
            <Properties barWidth={15} />
          </Panel>
        </Dock>
        <RightDock>
          <RightPane $share={389}>
            <Grip $thin />
            <TabStrip>
              <Tab>截面编辑</Tab>
              <Tab $active>构件做法</Tab>
            </TabStrip>
            <ToolRow>
              <Tool icon="addList">添加清单</Tool>
              <Tool icon="addQuota" off>添加定额</Tool>
              <Tool icon="removeOff" off>删除</Tool>
              <Tool icon="query" caret>查询</Tool>
              <Tool icon="feature">项目特征</Tool>
            </ToolRow>
            <GridTable $width={357}>
              <colgroup>
                <col width="111" />
                <col width="46" />
                <col width="200" />
              </colgroup>
              <thead>
                <tr>
                  <GridTh>编码</GridTh>
                  <GridTh>类别</GridTh>
                  <GridTh>名称</GridTh>
                </tr>
              </thead>
            </GridTable>
            <HScroll>
              <Svg width="4" height="8" viewBox="0 0 4 8" aria-hidden="true">
                <path d="M4 0v8L0 4z" fill="#222" />
              </Svg>
              <HThumb />
            </HScroll>
          </RightPane>
          <RightPane $share={184}>
            <QueryTabs>
              {["查询匹配清单", "查询匹配定额", "查询外部清单", "查询清单库"].map((label, i) => (
                <QueryTab key={label} $active={i === 0}>
                  <QueryTabButton $active={i === 0}>{label}</QueryTabButton>
                  <Close label={`关闭${label}`} size={8} />
                </QueryTab>
              ))}
            </QueryTabs>
            <RadioRow>
              <RadioLabel>
                <Radio name="filter" defaultChecked />
                按构件类型过滤
              </RadioLabel>
              <RadioLabel>
                <Radio name="filter" />
                按构件属性过滤
              </RadioLabel>
            </RadioRow>
            <GridTable $width={361}>
              <colgroup>
                <col width="112" />
                <col width="201" />
                <col width="48" />
              </colgroup>
              <thead>
                <tr>
                  <GridTh>编码</GridTh>
                  <GridTh>名称</GridTh>
                  <GridTh>单位</GridTh>
                </tr>
              </thead>
            </GridTable>
          </RightPane>
        </RightDock>
      </DialogBody>
    </Dialog>
  );
}

function App() {
  return (
    <>
      <GlobalStyle />
      <Page>
        <MenuBar>
          <MenuTabs>
            <MenuTab>开始</MenuTab>
            <MenuTab>工程设置</MenuTab>
            <MenuTab $active>建模</MenuTab>
            <MenuTab>视图</MenuTab>
            <MenuTab>工具</MenuTab>
            <MenuTab>工程量</MenuTab>
            <MenuTab>云应用</MenuTab>
          </MenuTabs>
        </MenuBar>
        <MainRibbon />
        <OptionBar>
          <Combo label="楼层" value="首层" />
          <Combo label="构件大类" value="柱" />
          <Combo label="构件类型" value="柱" />
          <Combo label="构件" value="KZ-1" />
          <CheckLabel>
            <CheckBox />
            旋转点
          </CheckLabel>
          <AngleLabel>
            角度:
            <AngleInput type="text" defaultValue="0" />
          </AngleLabel>
        </OptionBar>
        <MainWorkspace />
        <DefinitionDialog />
        <Arrows width="1100" height="280" viewBox="0 0 1100 280" aria-hidden="true">
          <g fill="#ffff00">
            <path d="M51 262L127 47l-5-2 16-17 3 23-5-2L53 262z" />
            <path d="M138 28l47 12 1-6 16 12-19 3 1-5-46-15z" />
            <path d="M203 47l809 94v-3l17 10-19 8 1-5L203 49z" />
          </g>
          <path d="M965 0l2 2" stroke="#2b4a6b" />
        </Arrows>
      </Page>
    </>
  );
}

export default App;
